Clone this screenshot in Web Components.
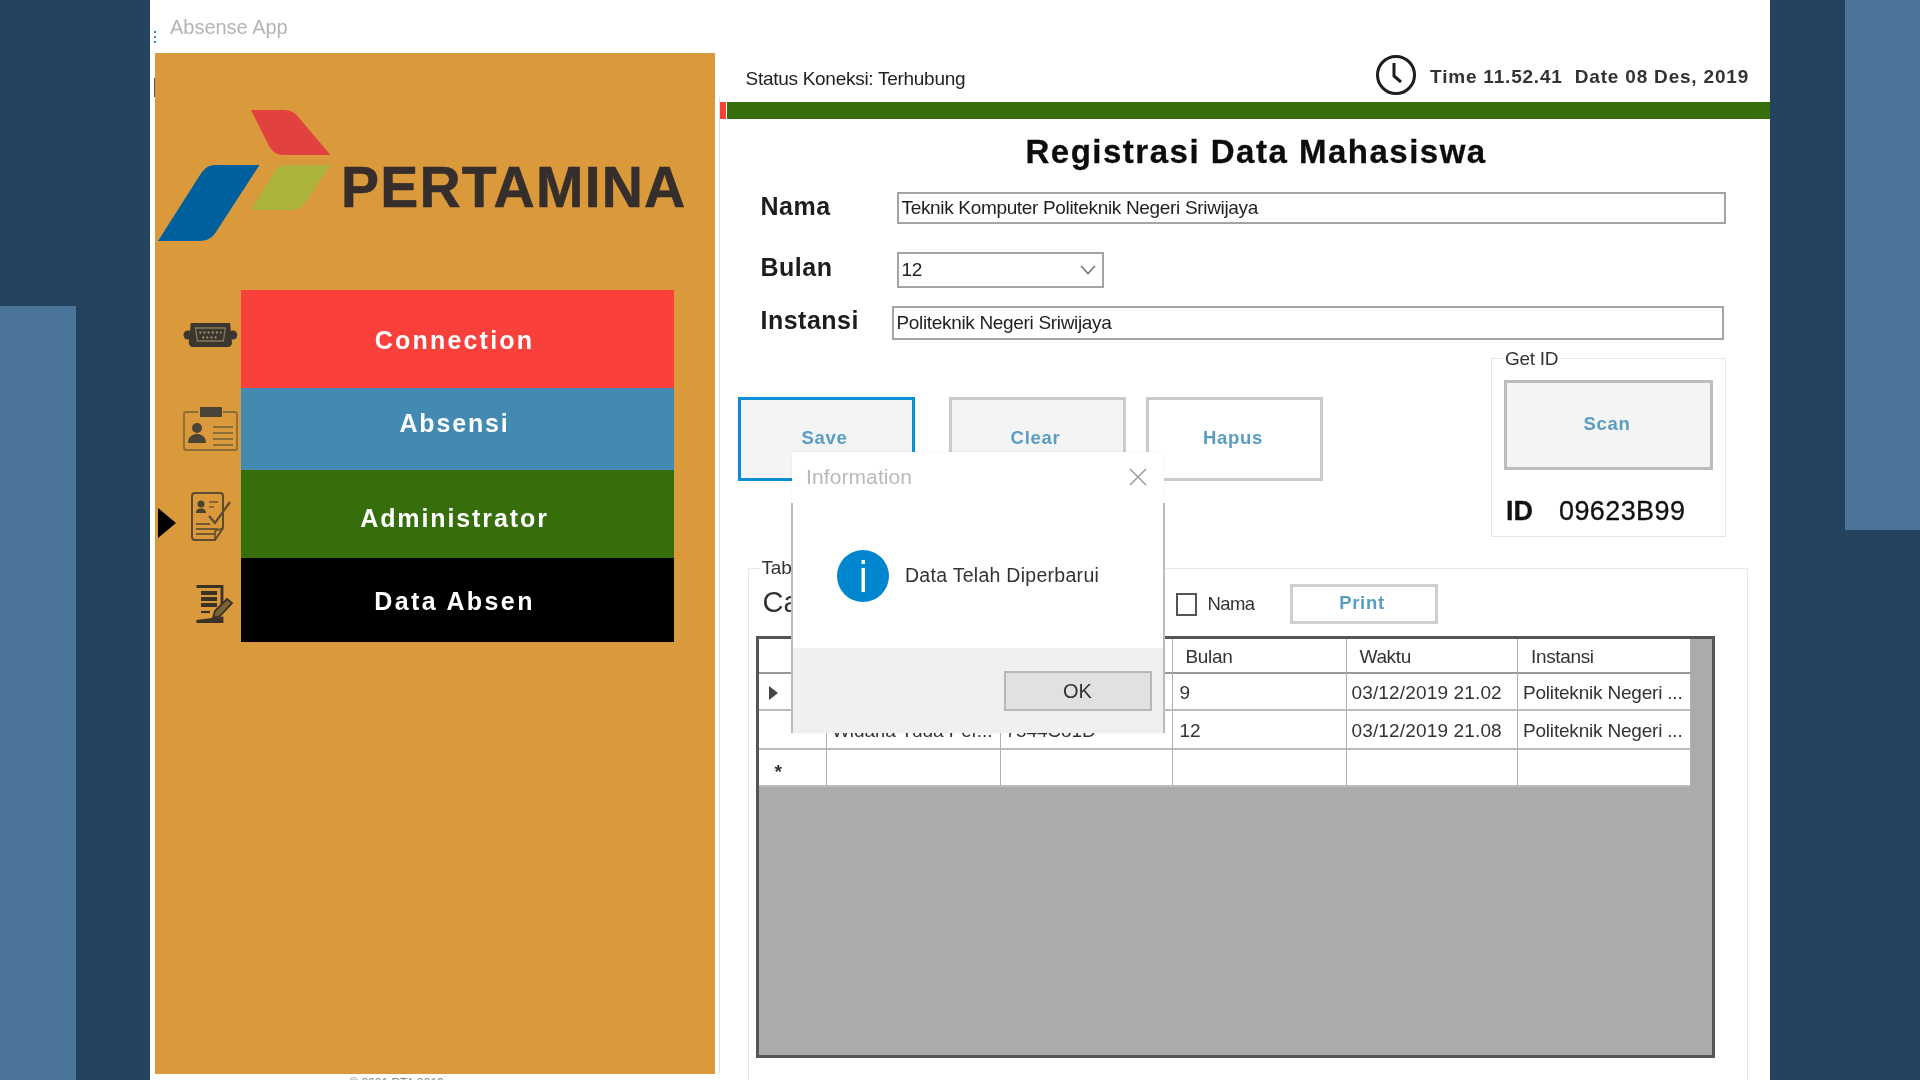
<!DOCTYPE html>
<html lang="id">
<head>
<meta charset="utf-8">
<title>Absense App</title>
<style>
html,body{margin:0;padding:0;width:1920px;height:1080px;overflow:hidden;background:#24435f;font-family:"Liberation Sans",Arial,sans-serif}
</style>
</head>
<body>
<slide-page></slide-page>
<script>
function def(name, css, html){
  customElements.define(name, class extends HTMLElement{
    constructor(){super();this.attachShadow({mode:'open'}).innerHTML='<style>'+css+'</style>'+html;}
  });
}
def('slide-page',`
:host{display:flex;width:1920px;height:1080px;background:#24435f;overflow:hidden}
.rail{width:76px;flex:none;display:flex;flex-direction:column}
.rail.l{justify-content:flex-end;margin-right:74px}
.rail i{display:block;background:#4c7699}
.rail.l i{height:774px}
.rail.r{width:75px;margin-left:auto}
.rail.r i{height:530px}
`,`<div class="rail l"><i></i></div><app-window></app-window><div class="rail r"><i></i></div>`);

def('app-window',`
:host{display:flex;flex-direction:column;position:relative;flex:none;width:1620px;height:1080px;background:#fff;overflow:hidden;filter:blur(.45px)}
.title{height:53px;flex:none;box-sizing:border-box;padding:15px 0 0 20px;font-size:20px;line-height:24px;color:#b4b4b4;letter-spacing:-.02px}
.main{display:flex;flex:1;padding-left:4.5px;min-height:0}
.left{width:560px;flex:none}
.copy{font-size:12px;line-height:14px;color:#888;text-align:center;padding-top:2px;margin-left:-76px}
.sliver{position:absolute;left:3.500px;top:78px;width:1px;height:19px;background:#555}
.dots{position:absolute;left:4px;top:31px;width:2px;height:12px;background:repeating-linear-gradient(#2a8fc7 0 2px,transparent 2px 5px)}
`,`<div class="title">Absense App</div>
<div class="main"><div class="left"><side-bar></side-bar><div class="copy">© 2021 RTA 2019</div></div><main-pane></main-pane></div>
<span class="sliver"></span><span class="dots"></span>
<msg-dialog></msg-dialog>`);

def('pertamina-logo',`
:host{display:block;height:237px;position:relative}
svg{display:block;position:absolute;left:0;top:0}
.t{position:absolute;left:186.500px;top:100px;font:bold 57px/68px "Liberation Sans",Arial,sans-serif;letter-spacing:1.2px;color:#352e2c;-webkit-text-stroke:.6px #352e2c}
`,`<svg width="200" height="237" viewBox="0 0 200 237">
<path d="M96 57H128C136 57 141 60 145 66L175.500 102H128C122 102 118 99 114 93Z" fill="#e2423f"/>
<path d="M60 112H104.500L61 179C57 185 52 188 44 188H3L45 122C49 116 53 112 60 112Z" fill="#00609e"/>
<path d="M128.500 112H175.500L150 150C146 155 142 157 136 157H96L120 118C123 114 125 112 128.500 112Z" fill="#acb43c"/>
</svg><span class="t">PERTAMINA</span>`);

def('side-bar',`
:host{display:block;height:1021px;background:#da993a}
.menu{display:grid;grid-template-columns:86.500px 433px;grid-template-rows:98px 82px 88px 84px}
`,`<pertamina-logo></pertamina-logo>
<div class="menu">
<side-icon kind="port"></side-icon><menu-item style="--bg:#fa403a;--ls:2.2px;--pt:2px;--pb:0px">Connection</menu-item>
<side-icon kind="card"></side-icon><menu-item style="--bg:#428ab2;--ls:1.85px;--pt:0px;--pb:11px">Absensi</menu-item>
<side-icon kind="check"></side-icon><menu-item style="--bg:#366e0b;--ls:1.9px;--pt:8px;--pb:0px">Administrator</menu-item>
<side-icon kind="edit"></side-icon><menu-item style="--bg:#000;--ls:2.4px;--pt:3px;--pb:0px">Data Absen</menu-item>
</div>`);

def('menu-item',`
:host{display:flex;align-items:center;justify-content:center;background:var(--bg);color:#fff;font-size:25px;font-weight:bold;letter-spacing:var(--ls);padding-top:var(--pt);padding-bottom:var(--pb);box-sizing:border-box;padding-right:6px}
`,`<slot></slot>`);

const ICONS={
port:`<svg width="87" height="98" viewBox="0 0 87 98"><g transform="translate(29,33) scale(.96,1)">
<circle cx="4" cy="12" r="4.500" fill="#3b3630"/><circle cx="51" cy="12" r="4.500" fill="#3b3630"/>
<path d="M7 0H48L50 20C50 22 48 24 46 24H9C7 24 5 22 5 20Z" fill="#3b3630"/>
<path d="M12 5H43L41 18H14Z" fill="none" stroke="#8a7a58" stroke-width="1.300"/>
<path d="M16 9.500H39M19 14.500H36" stroke="#a89468" stroke-width="1.800" stroke-dasharray="2 2.300"/></g></svg>`,
card:`<svg width="87" height="82" viewBox="0 0 87 82"><g transform="translate(28,19)" fill="none">
<path d="M15 5H3C1.500 5 1 6 1 7V41C1 42.500 1.500 43 3 43H52C53 43 54 42.500 54 41V7C54 6 53 5 52 5H40" stroke="#8b6d38" stroke-width="1.800"/>
<rect x="17" y="0" width="22" height="10" rx="1" fill="#4a4438"/>
<circle cx="14" cy="21" r="5" fill="#4a4438"/><path d="M5 36C5 29 10 28 12 27H16C18 28 23 29 23 36Z" fill="#4a4438"/>
<path d="M30 20H50M30 26H50M30 32H50M30 38H50" stroke="#8b6d38" stroke-width="2"/></g></svg>`,
check:`<svg width="87" height="88" viewBox="0 0 87 88"><path d="M3 38L21 53L3 68Z" fill="#000"/><g transform="translate(37,23)" fill="none">
<path d="M3 0H28C30 0 31 1 31 3V35L23 47H3C1 47 0 46 0 44V3C0 1 1 0 3 0Z" stroke="#5b4d31" stroke-width="2"/>
<path d="M31 35L23 38V47" stroke="#5b4d31" stroke-width="1.600"/>
<circle cx="9" cy="11" r="3.500" fill="#4a4030"/><path d="M4 20C4 16 7 15.500 9 15.500C11 15.500 14 16 14 20Z" fill="#4a4030"/>
<path d="M17 9H26M17 14H22" stroke="#6d5a35" stroke-width="1.600"/>
<path d="M17 23L23 30L38 9" stroke="#5b4d31" stroke-width="2.200"/>
<path d="M4 31H18M4 36H26M4 41H22" stroke="#6d5a35" stroke-width="1.800"/></g></svg>`,
edit:`<svg width="87" height="84" viewBox="0 0 87 84"><g transform="translate(40,27)" fill="none">
<path d="M1.500 1.500H27V19M27 33V36.500H1.500Z" stroke="#3a3227" stroke-width="2.800"/>
<path d="M6 8H22M6 14H22M6 20H22" stroke="#3a3227" stroke-width="4"/><path d="M6 27H15" stroke="#3a3227" stroke-width="2.200"/>
<path d="M18 33L20 26L32 14L37 18L25 31Z" fill="#7a6436" stroke="#3a3227" stroke-width="1.800"/></g></svg>`};
customElements.define('side-icon',class extends HTMLElement{
  constructor(){super();this.attachShadow({mode:'open'});}
  connectedCallback(){this.shadowRoot.innerHTML='<style>:host{display:block;overflow:hidden}svg{display:block}</style>'+ICONS[this.getAttribute('kind')];}
});

def('main-pane',`
:host{display:block;flex:1;margin-left:4px;min-width:0}
.status{height:44px;display:flex;justify-content:space-between;align-items:center;padding:0 21px 0 27px}
.status .s{font-size:19px;letter-spacing:-.28px;color:#222;padding-top:8px}
.clock{display:flex;align-items:center;gap:14px;font-size:19px;font-weight:bold;letter-spacing:.8px;color:#333;white-space:pre;padding-top:4px}
.clock svg{display:block;margin-top:-4px}
.wrap{border-left:1px solid #ddd;padding-top:5px;height:976px;box-sizing:border-box}
.bar{display:flex;height:17px;gap:1px}
.bar i{display:block;width:6px;background:#fa403a}
.bar b{display:block;flex:1;background:#366e0b}
h1{margin:0;height:73px;box-sizing:border-box;padding:15px 0 0 306px;font-size:33px;line-height:36px;letter-spacing:1.5px;color:#0c0c0c;white-space:nowrap;-webkit-text-stroke:.3px #0c0c0c}
.forms{display:flex;flex-direction:column}
.below{display:flex;justify-content:space-between;margin-top:8px;padding-right:44px}
.btns{display:flex;margin:49px 0 0 18px}
`,`<div class="status"><span class="s">Status Koneksi: Terhubung</span>
<span class="clock"><svg width="40" height="40" viewBox="0 0 40 40" fill="none" stroke="#1d1d1d"><ellipse cx="20" cy="20" rx="18.500" ry="18.500" stroke-width="3"/><path d="M18 8V21L25 27" stroke-width="3"/></svg><span>Time 11.52.41  Date 08 Des, 2019</span></span></div>
<div class="wrap">
<div class="bar"><i></i><b></b></div>
<h1>Registrasi Data Mahasiswa</h1>
<div class="forms">
<form-row label="Nama" value="Teknik Komputer Politeknik Negeri Sriwijaya" style="--lw:136px;--h:32px;--w:829px;--mb:28px"></form-row>
<form-row label="Bulan" value="12" select style="--lw:136px;--h:36px;--w:207px;--mb:18px;--ly:-3px"></form-row>
<form-row label="Instansi" value="Politeknik Negeri Sriwijaya" style="--lw:131px;--h:34px;--w:832px;--mb:0px;--ly:-3px"></form-row>
</div>
<div class="below">
<div class="btns">
<win-button style="--w:177px;--h:84px;--bg:#f4f4f4;--bd:#0a8fd4;--mr:34px">Save</win-button>
<win-button style="--w:177px;--h:84px;--bg:#f4f4f4;--bd:#cacaca;--mr:20.500px">Clear</win-button>
<win-button style="--w:177px;--h:84px;--bg:#fff;--bd:#cacaca">Hapus</win-button>
</div>
<get-id-box></get-id-box>
</div>
<table-box></table-box>
</div>`);

customElements.define('form-row',class extends HTMLElement{
  constructor(){super();this.attachShadow({mode:'open'});}
  connectedCallback(){
    const sel=this.hasAttribute('select');
    this.shadowRoot.innerHTML=`<style>
:host{display:flex;align-items:center;padding-left:41px;margin-bottom:var(--mb)}
.l{width:var(--lw);flex:none;font-size:25px;font-weight:bold;letter-spacing:.5px;color:#1d1d1d;position:relative;top:var(--ly,-2px)}
.f{width:var(--w);height:var(--h);box-sizing:border-box;border:2px solid #a4a4a4;display:flex;align-items:center;justify-content:space-between;padding:0 6px 0 3px;font-size:19px;letter-spacing:-.33px;color:#1f1f1f;background:#fff}
svg{display:block}
</style><span class="l">${this.getAttribute('label')}</span><div class="f"><span>${this.getAttribute('value')}</span>${sel?'<svg width="16" height="10" viewBox="0 0 16 10" fill="none" stroke="#777" stroke-width="1.600"><path d="M1 1L8 8.500L15 1"/></svg>':''}</div>`;
  }
});

def('win-button',`
:host{display:flex;align-items:center;justify-content:center;width:var(--w);height:var(--h);margin-right:var(--mr,0);box-sizing:border-box;border:3px solid var(--bd);background:var(--bg);color:#5a9dc3;font-size:18.500px;font-weight:bold;letter-spacing:.7px;flex:none;padding:0 3px 2px 0}
`,`<slot></slot>`);

def('get-id-box',`
:host{display:block;width:235px;flex:none}
fieldset{margin:0;padding:12px 12px 5px;border:1px solid #e6e6e6;box-sizing:border-box;width:235px;height:189px}
legend{padding:0 2px;margin-left:-1px;font-size:19px;line-height:20px;letter-spacing:-.3px;color:#333;position:relative;top:1px}
.id{display:flex;gap:26px;margin-top:21px;padding-left:2px;font-size:27px;line-height:40px;color:#111;letter-spacing:.4px;-webkit-text-stroke:.3px #111}
.id b{letter-spacing:0}
win-button{--w:209px;--h:90px;--bg:#f4f4f4;--bd:#bdbdbd}
`,`<fieldset><legend>Get ID</legend><win-button>Scan</win-button><div class="id"><b>ID</b><span>09623B99</span></div></fieldset>`);

def('table-box',`
:host{display:block;margin:21px 22px 0 28px}
fieldset{margin:0;padding:6px 0 0 7px;border:1px solid #e8e8e8;border-bottom:0;box-sizing:border-box;height:530px}
legend{padding:0 2px;margin-left:4px;font-size:19px;line-height:20px;letter-spacing:-.2px;color:#333}
.tool{display:flex;align-items:center;height:40px;margin-bottom:12px;position:relative}
.ca{font-size:29px;margin-left:7px;color:#333;width:413px;flex:none;padding-bottom:4px}
.cb{width:21px;height:23px;box-sizing:border-box;border:2px solid #555;background:#fff;margin-right:11px;flex:none}
.n{font-size:18.500px;letter-spacing:-.6px;color:#333;width:82px;flex:none}
win-button{--w:148px;--h:40px;--bg:#fff;--bd:#d0d0d0}
`,`<fieldset><legend>Tabel Data</legend><div class="tool"><span class="ca">Cari</span><span class="cb"></span><span class="n">Nama</span><win-button>Print</win-button></div><data-grid></data-grid></fieldset>`);

const HD=['','','','Bulan','Waktu','Instansi'];
const ROWS=[['▸','','','9','03/12/2019 21.02','Politeknik Negeri ...'],['','Widaria Yuda Per...','7544C81D','12','03/12/2019 21.08','Politeknik Negeri ...'],['*','','','','','']];
customElements.define('data-grid',class extends HTMLElement{
  constructor(){
    super();
    const cell=(t,c,i)=>{
      if(t==='▸')return `<div class="c rh"><svg width="9" height="14" viewBox="0 0 9 14"><path d="M0 0L9 7L0 14Z" fill="#444"/></svg></div>`;
      return `<div class="c ${c} k${i}${i===0?' rh':''}">${t}</div>`;
    };
    let h=HD.map((t,i)=>cell(t,'h',i)).join('');
    ROWS.forEach(r=>{h+=r.map((t,i)=>cell(t,'d',i)).join('');});
    this.attachShadow({mode:'open'}).innerHTML=`<style>
:host{display:block;width:959px;height:422px;box-sizing:border-box;border:3px solid #555;border-left-width:3px;background:#ababab}
.g{display:grid;grid-template-columns:68.500px 173.500px 172px 174px 171.500px 172.500px;grid-template-rows:35px 37px 39px 37px;width:932px}
.c{background:#fff;box-sizing:border-box;border-right:1px solid #b0b0b0;border-bottom:2px solid #bcbcbc;font-size:19px;letter-spacing:-.1px;color:#333;display:flex;align-items:center;padding:2px 5px 0;white-space:nowrap;overflow:hidden}
.d.k3{padding-left:7px}
.d.k4{letter-spacing:.15px}
.d.k5{letter-spacing:-.2px}
.h{padding-left:13px;letter-spacing:-.35px;border-bottom-color:#999}
.rh{padding:3px 47px 0 0;justify-content:center;font-weight:bold}
.rh svg{display:block;margin-left:9px}
.d.k0:not(:empty){padding:9px 28px 0 0;align-items:center}
</style><div class="g">${h}</div>`;
  }
});

def('msg-dialog',`
:host{position:absolute;left:642px;top:452px;width:372px;height:281px;background:#fff;display:flex;flex-direction:column;box-shadow:0 0 2px rgba(0,0,0,.08)}
:host::before,:host::after{content:"";position:absolute;top:51px;bottom:0;width:2px;background:#bcbcbc}
:host::before{left:-1px}:host::after{right:-1px}
.t{height:52px;flex:none;display:flex;justify-content:space-between;align-items:center;padding:0 17px 2px 14px;box-sizing:border-box;font-size:21px;color:#b9b9b9;letter-spacing:.1px}
.b{flex:1;display:flex;align-items:flex-start;padding:46px 0 0 45px;gap:16px;font-size:19.500px;letter-spacing:.28px;color:#333}
.b span{margin-top:14px}
.i{flex:none;display:block}
.f{height:85px;flex:none;background:#f0f0f0;display:flex;justify-content:flex-end;align-items:flex-start;padding:23px 12.500px 0 0;box-sizing:border-box}
.ok{width:148px;height:40px;box-sizing:border-box;background:#e1e1e1;border:2px solid #b8b8b8;display:flex;align-items:center;justify-content:center;font-size:20px;color:#333}
svg{display:block}
`,`<div class="t"><span>Information</span><svg width="18" height="18" viewBox="0 0 18 18" stroke="#999" stroke-width="1.500"><path d="M1 1L17 17M17 1L1 17"/></svg></div>
<div class="b"><svg class="i" width="52" height="52" viewBox="0 0 52 52"><circle cx="26" cy="26" r="26" fill="#0086cf"/><rect x="24.500" y="10" width="3.500" height="4" fill="#fff"/><rect x="24.500" y="18" width="3.500" height="24" fill="#fff"/></svg><span>Data Telah Diperbarui</span></div>
<div class="f"><div class="ok">OK</div></div>`);
</script>
</body>
</html>
